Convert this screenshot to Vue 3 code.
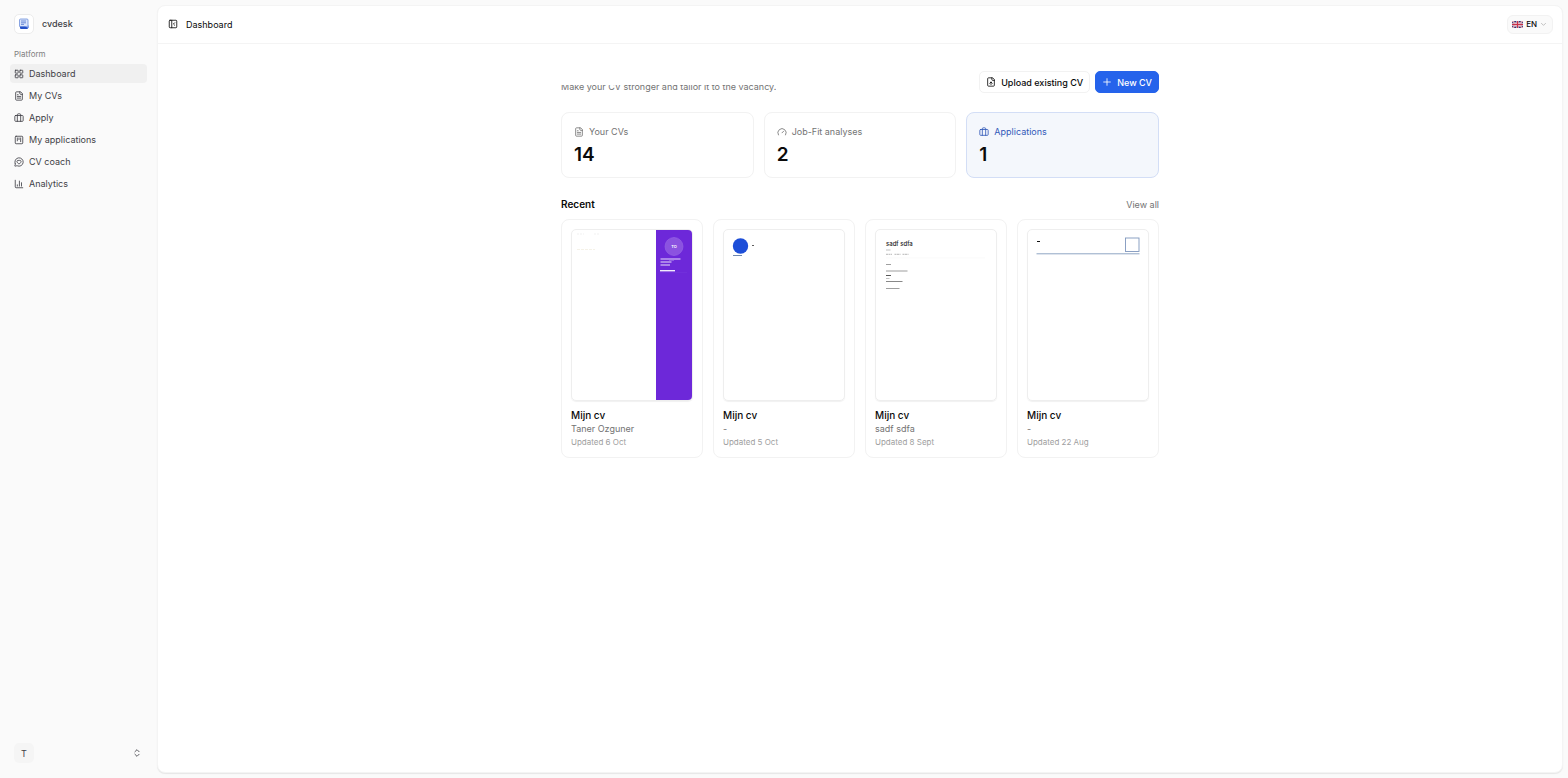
<template>
  <div class="app">
    <aside class="sidebar">
      <a href="#" class="brand">
        <span class="brand-logo">
          <svg viewBox="0 0 12 12" width="12" height="12">
            <rect x="1.5" y="1" width="8.5" height="8" rx="1" fill="#dbe5fb" stroke="#6d8fdb" stroke-width="0.8" />
            <path d="M3 3h5M3 4.8h5M3 6.4h3" stroke="#5277cf" stroke-width="0.8" />
            <path d="M2 8.5h8v1.500a1 1 0 0 1-1 1H3a1 1 0 0 1-1-1z" fill="#2450c8" />
            <path d="M7 8.5l4-1.2v3z" fill="#8ea9ea" />
          </svg>
        </span>
        <span>cvdesk</span>
      </a>

      <p class="group-label">Platform</p>
      <nav class="nav">
        <a
          v-for="item in navItems"
          :key="item.label"
          href="#"
          class="nav-item"
          :class="{ active: item.label === current }"
          @click.prevent="current = item.label"
        >
          <svg class="icon" viewBox="0 0 24 24"><path v-for="d in icons[item.icon]" :key="d" :d="d" /></svg>
          <span>{{ item.label }}</span>
        </a>
      </nav>

      <button type="button" class="user" aria-label="Account">
        <span class="avatar">T</span>
        <svg class="icon" viewBox="0 0 24 24"><path d="m7 15 5 5 5-5" /><path d="m7 9 5-5 5 5" /></svg>
      </button>
    </aside>

    <main class="panel">
      <header class="topbar">
        <button type="button" class="toggle" aria-label="Toggle sidebar">
          <svg class="icon" viewBox="0 0 24 24"><path v-for="d in icons.panel" :key="d" :d="d" /></svg>
        </button>
        <span class="page-title">Dashboard</span>
        <button type="button" class="lang">
          <svg class="flag" viewBox="0 0 60 36" preserveAspectRatio="none">
            <rect width="60" height="36" fill="#2b3675" />
            <path d="M0 0l60 36M60 0L0 36" stroke="#fff" stroke-width="7" />
            <path d="M0 0l60 36M60 0L0 36" stroke="#c8324b" stroke-width="3" />
            <path d="M30 0v36M0 18h60" stroke="#fff" stroke-width="12" />
            <path d="M30 0v36M0 18h60" stroke="#c8324b" stroke-width="7" />
          </svg>
          <span>EN</span>
          <svg class="chevron" viewBox="0 0 24 24"><path d="m5 8 7 7 7-7" /></svg>
        </button>
      </header>

      <div class="content">
        <section class="intro">
          <div class="intro-text">
            <p>Make your CV stronger and tailor it to the vacancy.</p>
          </div>
          <div class="actions">
            <button type="button" class="btn">
              <svg class="icon" viewBox="0 0 24 24"><path v-for="d in icons.upload" :key="d" :d="d" /></svg>
              Upload existing CV
            </button>
            <button type="button" class="btn primary">
              <svg class="icon" viewBox="0 0 24 24"><path d="M4 12h16" /><path d="M12 4v16" /></svg>
              New CV
            </button>
          </div>
        </section>

        <section class="stats">
          <a v-for="stat in stats" :key="stat.label" href="#" class="stat" :class="{ highlight: stat.highlight }">
            <span class="stat-label">
              <svg class="icon" viewBox="0 0 24 24"><path v-for="d in icons[stat.icon]" :key="d" :d="d" /></svg>
              {{ stat.label }}
            </span>
            <span class="stat-value">{{ stat.value }}</span>
          </a>
        </section>

        <div class="section-head">
          <h2>Recent</h2>
          <a href="#">View all</a>
        </div>

        <section class="cards">
          <a v-for="cv in cvs" :key="cv.updated" href="#" class="card">
            <div class="thumb">
              <!-- purple sidebar template -->
              <svg v-if="cv.template === 'purple'" viewBox="0 0 120 170">
                <path d="M5 4h7M22 4h5" stroke="#eeeeee" stroke-width="0.8" stroke-dasharray="2 1" />
                <path d="M5 19.500h18" stroke="#f3efe2" stroke-width="0.8" stroke-dasharray="3 1" />
                <rect x="84" width="36" height="170" fill="#6d28d9" />
                <circle cx="102" cy="16.500" r="9" fill="#8b52e0" stroke="#9b6ae6" stroke-width="0.6" />
                <text x="102" y="18" font-size="4" font-weight="600" fill="#fff" text-anchor="middle">TO</text>
                <path d="M88.500 29h20M88.500 32h11M88.500 35h9.500" stroke="#fff" stroke-width="1" opacity="0.85" />
                <path d="M97 30.300h5" stroke="#fff" stroke-width="0.6" opacity="0.5" />
                <path d="M88 40.700h15" stroke="#fff" stroke-width="1.400" opacity="0.9" />
                <path d="M88 42.500h27" stroke="#7a3bdd" stroke-width="0.4" />
              </svg>

              <!-- round photo template -->
              <svg v-else-if="cv.template === 'round'" viewBox="0 0 120 170">
                <circle cx="16.500" cy="16" r="7.700" fill="#1d4ed8" />
                <path d="M28 15.500h2" stroke="#333" stroke-width="0.8" />
                <path d="M9 25.500h9" stroke="#4a6a9c" stroke-width="0.8" />
              </svg>

              <!-- plain template -->
              <svg v-else-if="cv.template === 'plain'" viewBox="0 0 120 170">
                <text x="10" y="15.500" font-size="6" font-weight="500" fill="#1a1a1a">sadf sdfa</text>
                <g stroke="#555" stroke-width="0.7">
                  <path d="M10 20h4.500" opacity="0.5" />
                  <path d="M10 24.300h6M18.500 24.300h6M26.500 24.300h6" stroke-dasharray="2 0.500" opacity="0.6" />
                  <path d="M10 34.500h5" opacity="0.8" />
                  <path d="M10 41h21.500" opacity="0.8" />
                  <path d="M10 45.500h5" stroke="#111" />
                  <path d="M10 48.500h3.500" opacity="0.5" />
                  <path d="M10 51.500h16.500" />
                  <path d="M10 58.500h13.500" opacity="0.8" />
                </g>
                <path d="M10 28h99" stroke="#f7f7f7" stroke-width="0.6" />
              </svg>

              <!-- square photo template -->
              <svg v-else viewBox="0 0 120 170">
                <path d="M9 11.500h3" stroke="#111" stroke-width="1" />
                <rect x="97.500" y="8" width="13.500" height="13.500" fill="none" stroke="#7f97bd" stroke-width="0.9" />
                <path d="M8.500 23.800h103" stroke="#8fa5c4" stroke-width="1" />
              </svg>
            </div>
            <h3>{{ cv.title }}</h3>
            <p class="name">{{ cv.name }}</p>
            <p class="updated">{{ cv.updated }}</p>
          </a>
        </section>
      </div>
    </main>
  </div>
</template>

<script setup>
import { ref } from 'vue'

const current = ref('Dashboard')

const filePath = [
  'M15 2H6a2 2 0 0 0-2 2v16a2 2 0 0 0 2 2h12a2 2 0 0 0 2-2V7Z',
  'M14 2v4a2 2 0 0 0 2 2h4',
]

const icons = {
  grid: ['M4 3h5a1 1 0 0 1 1 1v5a1 1 0 0 1-1 1H4a1 1 0 0 1-1-1V4a1 1 0 0 1 1-1z', 'M15 3h5a1 1 0 0 1 1 1v5a1 1 0 0 1-1 1h-5a1 1 0 0 1-1-1V4a1 1 0 0 1 1-1z', 'M15 14h5a1 1 0 0 1 1 1v5a1 1 0 0 1-1 1h-5a1 1 0 0 1-1-1v-5a1 1 0 0 1 1-1z', 'M4 14h5a1 1 0 0 1 1 1v5a1 1 0 0 1-1 1H4a1 1 0 0 1-1-1v-5a1 1 0 0 1 1-1z'],
  file: [...filePath, 'M10 9H8', 'M16 13H8', 'M16 17H8'],
  upload: [...filePath, 'M12 12v6', 'm15 15-3-3-3 3'],
  case: ['M4 6h16a2 2 0 0 1 2 2v10a2 2 0 0 1-2 2H4a2 2 0 0 1-2-2V8a2 2 0 0 1 2-2z', 'M16 20V4a2 2 0 0 0-2-2h-4a2 2 0 0 0-2 2v16'],
  kanban: ['M5 3h14a2 2 0 0 1 2 2v14a2 2 0 0 1-2 2H5a2 2 0 0 1-2-2V5a2 2 0 0 1 2-2z', 'M8 7v7', 'M12 7v4', 'M16 7v9'],
  coach: ['M2.992 16.342a2 2 0 0 1 .094 1.167l-1.065 3.290a1 1 0 0 0 1.236 1.168l3.413-.998a2 2 0 0 1 1.099.092 10 10 0 1 0-4.777-4.719', 'M7.828 13.070A3 3 0 0 1 12 8.764a3 3 0 0 1 5.004 2.224 3 3 0 0 1-.832 2.083l-3.447 3.620a1 1 0 0 1-1.450-.001z'],
  chart: ['M3 3v16a2 2 0 0 0 2 2h16', 'M8 17v-3', 'M13 17V5', 'M18 17V9'],
  gauge: ['m12 14 4-4', 'M3.340 19a10 10 0 1 1 17.320 0'],
  panel: ['M5 3h14a2 2 0 0 1 2 2v14a2 2 0 0 1-2 2H5a2 2 0 0 1-2-2V5a2 2 0 0 1 2-2z', 'M9 3v18', 'm16 15-3-3 3-3'],
}

const navItems = [
  { label: 'Dashboard', icon: 'grid' },
  { label: 'My CVs', icon: 'file' },
  { label: 'Apply', icon: 'case' },
  { label: 'My applications', icon: 'kanban' },
  { label: 'CV coach', icon: 'coach' },
  { label: 'Analytics', icon: 'chart' },
]

const stats = [
  { label: 'Your CVs', value: 14, icon: 'file' },
  { label: 'Job-Fit analyses', value: 2, icon: 'gauge' },
  { label: 'Applications', value: 1, icon: 'case', highlight: true },
]

const cvs = [
  { title: 'Mijn cv', name: 'Taner Ozguner', updated: 'Updated 6 Oct', template: 'purple' },
  { title: 'Mijn cv', name: '-', updated: 'Updated 5 Oct', template: 'round' },
  { title: 'Mijn cv', name: 'sadf sdfa', updated: 'Updated 8 Sept', template: 'plain' },
  { title: 'Mijn cv', name: '-', updated: 'Updated 22 Aug', template: 'square' },
]
</script>

<style>
body {
  margin: 0;
  background: #fafafa;
}
</style>

<style scoped>
.app {
  display: flex;
  min-height: 100vh;
  box-sizing: border-box;
  font-family: Inter, "Liberation Sans", sans-serif;
  font-size: 9px;
  line-height: 13px;
  color: #0a0a0a;
}

.app * {
  box-sizing: border-box;
}

a {
  color: inherit;
  text-decoration: none;
}

button {
  font: inherit;
  color: inherit;
  border: 0;
  padding: 0;
  background: none;
  cursor: pointer;
}

h2,
h3,
p {
  margin: 0;
}

.icon,
.chevron {
  width: 10px;
  height: 10px;
  flex: none;
  fill: none;
  stroke: currentColor;
  stroke-width: 2;
  stroke-linecap: round;
  stroke-linejoin: round;
}

/* Sidebar */
.sidebar {
  width: 157px;
  flex: none;
  display: flex;
  flex-direction: column;
  padding: 14px 10px 15px;
  color: #3f3f46;
}

.brand {
  display: flex;
  align-items: center;
  gap: 8px;
  padding-left: 4px;
  line-height: 14px;
  font-weight: 500;
}

.brand-logo {
  display: grid;
  place-items: center;
  width: 20px;
  height: 20px;
  border: 1px solid #ececec;
  border-radius: 5px;
  background: #fff;
}

.group-label {
  margin: 14px 0 3px 4px;
  font-size: 8px;
  color: #808080;
}

.nav {
  display: flex;
  flex-direction: column;
  gap: 3px;
}

.nav-item {
  display: flex;
  align-items: center;
  gap: 5px;
  height: 19px;
  padding: 0 4px;
  border-radius: 4px;
}

.nav-item.active {
  background: #f0f0f0;
}

.user {
  display: flex;
  align-items: center;
  justify-content: space-between;
  margin-top: auto;
  padding: 0 5px 0 4px;
}

.avatar {
  display: grid;
  place-items: center;
  width: 20px;
  height: 20px;
  border-radius: 5px;
  background: #f5f5f5;
}

/* Main panel */
.panel {
  flex: 1;
  min-width: 0;
  margin: 5px 5px 5px 0;
  border: 1px solid #f4f4f4;
  border-radius: 8px;
  background: #fff;
  box-shadow: 0 1px 1px rgba(0, 0, 0, 0.08);
}

.topbar {
  display: flex;
  align-items: center;
  gap: 8px;
  height: 38px;
  padding: 0 9px 1px 10px;
  border-bottom: 1px solid #f4f4f4;
}

.toggle {
  display: flex;
}

.lang {
  display: flex;
  align-items: center;
  gap: 3px;
  height: 19px;
  margin-left: auto;
  padding: 0 5px 0 4px;
  border: 1px solid #f2f2f2;
  border-radius: 6px;
  background: #fafafa;
  font-size: 8px;
  font-weight: 500;
}

.flag {
  width: 11px;
  height: 7px;
}

.chevron {
  width: 7px;
  height: 7px;
  color: #999;
}

.content {
  max-width: 598px;
  margin: 0 auto;
  padding: 27px 0;
}

.intro {
  display: flex;
  justify-content: space-between;
  gap: 20px;
}

.intro-text {
  height: 8px;
  margin-top: 14px;
  overflow: hidden;
  color: #737373;
}

.intro-text p {
  margin-top: -5px;
}

.actions {
  display: flex;
  gap: 5px;
}

.btn {
  display: flex;
  align-items: center;
  gap: 5px;
  height: 22px;
  padding: 0 6px;
  border: 1px solid #f2f2f2;
  border-radius: 5px;
  background: #fff;
  font-weight: 500;
}

.btn.primary {
  border-color: #2563eb;
  background: #2563eb;
  color: #fff;
}

/* Stats */
.stats {
  display: grid;
  grid-template-columns: repeat(3, 1fr);
  gap: 10px;
  margin-top: 19px;
}

.stat {
  display: flex;
  flex-direction: column;
  gap: 6px;
  padding: 12px 12px 11px;
  border: 1px solid #f2f2f2;
  border-radius: 8px;
}

.stat-label {
  display: flex;
  align-items: center;
  gap: 5px;
  color: #737373;
}

.stat-value {
  font-size: 19px;
  line-height: 22px;
  font-weight: 600;
}

.stat.highlight {
  border-color: #d3def6;
  background: #f4f7fc;
}

.stat.highlight .stat-label {
  color: #3159b8;
}

/* Recent */
.section-head {
  display: flex;
  align-items: center;
  justify-content: space-between;
  margin: 20px 0 8px;
  color: #737373;
}

.section-head h2 {
  font-size: 10px;
  font-weight: 600;
  color: #0a0a0a;
}

.cards {
  display: grid;
  grid-template-columns: repeat(4, 1fr);
  gap: 10px;
}

.card {
  padding: 9px 9px 8px;
  border: 1px solid #f2f2f2;
  border-radius: 8px;
}

.thumb {
  overflow: hidden;
  border: 1px solid #eeeeee;
  border-radius: 5px;
  box-shadow: 0 1px 1px rgba(0, 0, 0, 0.06);
}

.thumb svg {
  display: block;
  width: 100%;
}

.card h3 {
  margin-top: 8px;
  font-size: 10px;
  font-weight: 500;
}

.name {
  margin-bottom: 1px;
  color: #737373;
}

.updated {
  font-size: 8px;
  color: #a0a0a0;
}
</style>
